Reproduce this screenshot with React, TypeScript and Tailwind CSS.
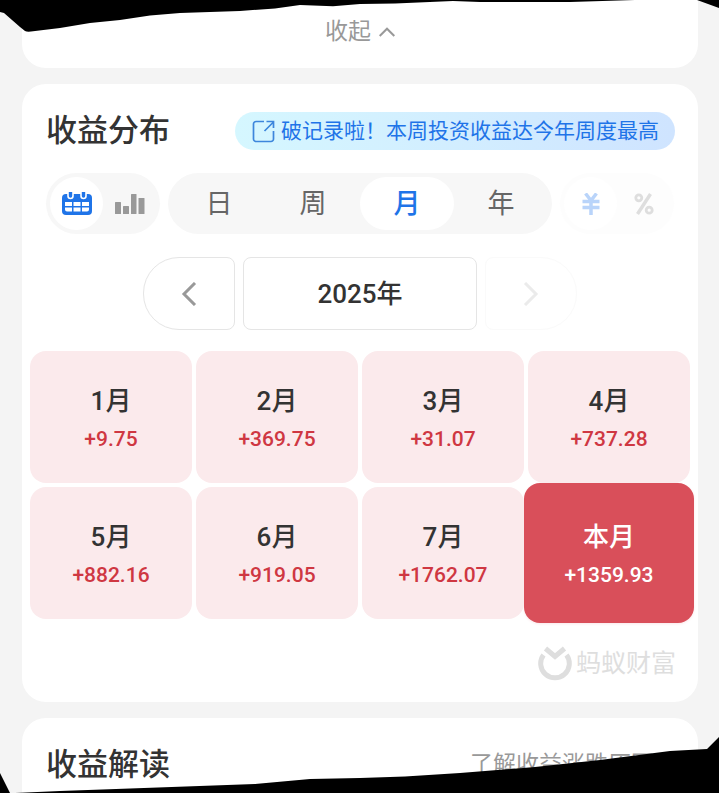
import { useState } from 'react';
import { clsx } from 'clsx';

interface MonthProfit {
  label: string;
  amount: string;
}

const months: MonthProfit[] = [
  { label: '1月', amount: '+9.75' },
  { label: '2月', amount: '+369.75' },
  { label: '3月', amount: '+31.07' },
  { label: '4月', amount: '+737.28' },
  { label: '5月', amount: '+882.16' },
  { label: '6月', amount: '+919.05' },
  { label: '7月', amount: '+1762.07' },
  { label: '本月', amount: '+1359.93' },
];

const periods = ['日', '周', '月', '年'];

function CalendarIcon() {
  return (
    <svg width="30" height="24" viewBox="0 0 30 24" aria-hidden="true">
      <rect x="0" y="2" width="30" height="21" rx="4" fill="#1f74e8" />
      <path d="M6 0v4a2.500 2.500 0 0 0 5 0V0M19 0v4a2.500 2.500 0 0 0 5 0V0" fill="#1f74e8" stroke="#fff" strokeWidth="1.600" />
      <g fill="#fff">
        <rect x="3" y="10" width="7" height="4" />
        <rect x="11.500" y="10" width="7" height="4" />
        <rect x="20" y="10" width="7" height="4" />
        <path d="M3 15.500h7v4H5a2 2 0 0 1-2-2zM11.500 15.500h7v4h-7zM20 15.500h7v2a2 2 0 0 1-2 2h-5z" />
      </g>
    </svg>
  );
}

function BarsIcon() {
  return (
    <svg width="30" height="20" viewBox="0 0 30 20" fill="#999" aria-hidden="true">
      <rect x="0" y="8" width="6" height="12" rx="0.500" />
      <rect x="8" y="12" width="6" height="8" rx="0.500" />
      <rect x="16" y="0" width="5.500" height="20" rx="0.500" />
      <rect x="23.500" y="4" width="6" height="16" rx="0.500" />
    </svg>
  );
}

function YuanIcon() {
  return (
    <svg width="18" height="22" viewBox="0 0 18 22" fill="none" stroke="#b9d4fa" strokeWidth="3.500" aria-hidden="true">
      <path d="M3.500 0.500L9 7.500L14.500 0.500M0.500 8.500h17M0.500 14.500h17M9 8v14" />
    </svg>
  );
}

function PercentIcon() {
  return (
    <svg width="20" height="22" viewBox="0 0 20 22" fill="none" stroke="#dedede" strokeWidth="2.800" aria-hidden="true">
      <circle cx="4.800" cy="4.800" r="3" />
      <circle cx="15.200" cy="17.200" r="3" />
      <path d="M16.500 1L3.500 21" strokeWidth="3.400" />
    </svg>
  );
}

function ShareIcon() {
  return (
    <svg width="23" height="23" viewBox="0 0 23 23" fill="none" stroke="#3d86dc" strokeWidth="1.700" aria-hidden="true">
      <path d="M12 1.500H4A2.500 2.500 0 0 0 1.500 4v15A2.500 2.500 0 0 0 4 21.500h15a2.500 2.500 0 0 0 2.500-2.500v-8" />
      <path d="M12.500 11L21.500 2M14.500 1.500h7V8" />
    </svg>
  );
}

function Watermark() {
  return (
    <div className="flex items-center justify-end gap-1 text-[#dedede]">
      <svg width="34" height="36" viewBox="0 0 34 36" fill="none" stroke="currentColor" aria-hidden="true">
        <path d="M5.500 9a14.300 14.300 0 1 0 23 0" strokeWidth="5" />
        <path d="M7.500 2.500l9.500 8 9.500-8" strokeWidth="5" />
      </svg>
      <span className="text-[25px] leading-9">蚂蚁财富</span>
    </div>
  );
}

// Ragged black strips over the top and bottom of the page
function TornEdges() {
  return (
    <>
      <svg
        className="pointer-events-none absolute top-0 left-0 h-8 w-full"
        viewBox="0 0 719 32"
        preserveAspectRatio="none"
        aria-hidden="true"
      >
        <path d="M0 0V12L4 13L20 27L25 31Q27 32 31 31.500L60 28L90 23L120 20L150 15.500L180 13L240 11L275 8.500L300 5L333 6.300L360 4L395 3.500L453 1L480 2H570L635 0ZM697 0L719 8V0Z" />
      </svg>
      <svg
        className="pointer-events-none absolute bottom-0 left-0 h-14 w-full"
        viewBox="0 0 719 56"
        preserveAspectRatio="none"
        aria-hidden="true"
      >
        <path d="M0 36L10 56H0ZM15 56L60 54L130 51.500L255 47L310 42L360 41L405 39.500L460 36L535 30L600 23L670 14L707 12L719 0V56Z" />
      </svg>
    </>
  );
}

export default function ProfitPage() {
  const [period, setPeriod] = useState('月');
  const [view, setView] = useState('calendar');

  return (
    <div className="relative flex min-h-screen flex-col gap-4 overflow-hidden bg-[#f4f4f4] pr-[21px] pl-[22px] font-[Roboto,'Noto_Sans_CJK_SC',sans-serif] text-[#333]">
      <section className="flex h-[68px] justify-center rounded-b-3xl bg-white pt-4">
        <button className="flex h-8 items-center gap-2 text-[23px] text-[#999]">
          收起
          <svg width="16" height="10" viewBox="0 0 16 10" fill="none" stroke="currentColor" strokeWidth="2" aria-hidden="true">
            <path d="M0.700 9L8 1.700L15.300 9" />
          </svg>
        </button>
      </section>

      <section className="rounded-3xl bg-white px-2 pt-7 pb-5">
        <div className="flex items-center justify-between pr-[15px] pl-4">
          <h2 className="text-[31px] leading-[38px] font-medium whitespace-nowrap">收益分布</h2>
          <a
            href="#record"
            className="flex h-[38px] items-center gap-[6px] rounded-full bg-linear-to-r from-[#d5f7ff] to-[#cfe4ff] pr-4 pl-[17px] text-[21px] whitespace-nowrap text-[#1f74e8]"
          >
            <ShareIcon />
            <span className="pt-0.5">破记录啦！本周投资收益达今年周度最高</span>
          </a>
        </div>

        <div className="mt-[23px] flex gap-2 px-4">
          <div className="flex h-[61px] w-[114px] rounded-full bg-[#f7f7f7] p-1">
            <button
              aria-label="日历"
              aria-pressed={view === 'calendar'}
              onClick={() => setView('calendar')}
              className={clsx('flex flex-1 items-center justify-center rounded-full', view === 'calendar' && 'bg-white')}
            >
              <CalendarIcon />
            </button>
            <button
              aria-label="柱状图"
              aria-pressed={view === 'bars'}
              onClick={() => setView('bars')}
              className={clsx('flex flex-1 items-center justify-center rounded-full', view === 'bars' && 'bg-white')}
            >
              <BarsIcon />
            </button>
          </div>

          <div className="flex h-[61px] flex-1 rounded-full bg-[#f7f7f7] p-1">
            {periods.map((p) => (
              <button
                key={p}
                aria-pressed={period === p}
                onClick={() => setPeriod(p)}
                className={clsx(
                  'flex-1 rounded-full pt-0.5 text-[27px]',
                  period === p ? 'bg-white font-medium text-[#1f74e8]' : 'text-[#666]'
                )}
              >
                {p}
              </button>
            ))}
          </div>

          <div className="flex h-[61px] w-[114px] rounded-full bg-[#fdfdfd] p-1">
            <button aria-label="金额" disabled className="flex flex-1 items-center justify-center rounded-full bg-white">
              <YuanIcon />
            </button>
            <button aria-label="百分比" disabled className="flex flex-1 items-center justify-center rounded-full">
              <PercentIcon />
            </button>
          </div>
        </div>

        <div className="mt-[23px] flex h-[73px] justify-center gap-2">
          <button
            aria-label="上一年"
            className="flex w-[92px] items-center justify-center rounded-l-[36px] rounded-r-lg border border-[#e5e5e5]"
          >
            <svg width="16" height="24" viewBox="0 0 16 24" fill="none" stroke="#999" strokeWidth="3" aria-hidden="true">
              <path d="M14 1L3 12L14 23" />
            </svg>
          </button>
          <button className="w-[234px] rounded-lg border border-[#e5e5e5] pt-0.5 text-[26px] font-medium">2025年</button>
          <button
            aria-label="下一年"
            disabled
            className="flex w-[92px] items-center justify-center rounded-l-lg rounded-r-[36px] border border-[#fafafa]"
          >
            <svg width="16" height="24" viewBox="0 0 16 24" fill="none" stroke="#ebebeb" strokeWidth="3" aria-hidden="true">
              <path d="M2 1L13 12L2 23" />
            </svg>
          </button>
        </div>

        <div className="mt-[21px] grid auto-rows-[132px] grid-cols-4 gap-1">
          {months.map((m) => {
            const current = m.label === '本月';
            return (
              <button
                key={m.label}
                className={clsx(
                  'flex flex-col items-center justify-center rounded-2xl pt-1 font-medium',
                  current ? '-m-1 bg-[#d94f5a] text-white shadow-sm shadow-[#fbeaec]' : 'bg-[#fbeaec]'
                )}
              >
                <span className="text-[26px] leading-10">{m.label}</span>
                <span className={clsx('text-[21px] leading-9', !current && 'text-[#cf3742]')}>{m.amount}</span>
              </button>
            );
          })}
        </div>

        <div className="mt-[27px] pr-[14px]">
          <Watermark />
        </div>
      </section>

      <section className="flex flex-1 items-start justify-between rounded-t-3xl bg-white px-6 pt-7">
        <h2 className="text-[31px] leading-[38px] font-medium">收益解读</h2>
        <a href="#insight" className="flex items-center gap-[10px] text-[23px] leading-[38px] text-[#999]">
          了解收益涨跌原因
          <svg width="10" height="16" viewBox="0 0 10 16" fill="none" stroke="currentColor" strokeWidth="2" aria-hidden="true">
            <path d="M1 1L8 8L1 15" />
          </svg>
        </a>
      </section>

      <TornEdges />
    </div>
  );
}
